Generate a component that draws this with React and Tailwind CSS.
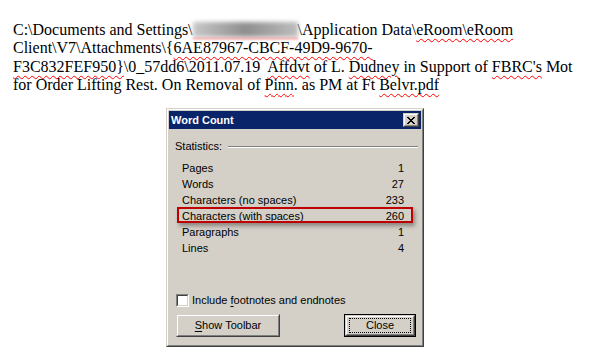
import React from "react";

const W = ({ children }) => (
  <span className="underline decoration-wavy decoration-[#ff0000] decoration-1 underline-offset-[3px]">
    {children}
  </span>
);

function Raised({ className = "", children }) {
  return (
    <div className={"border border-t-[#d4d0c8] border-l-[#d4d0c8] border-r-[#404040] border-b-[#404040] " + className}>
      <div className="w-full h-full border border-t-white border-l-white border-r-[#808080] border-b-[#808080] bg-[#d4d0c8] flex items-center justify-center">
        {children}
      </div>
    </div>
  );
}

const Row = ({ label, value, highlight }) => (
  <div className="relative h-[16px] leading-[16px] flex justify-between pl-[13px] pr-[17px]">
    {highlight && (
      <div className="absolute left-[8px] right-[8px] top-[-1px] h-[16px] border-2 border-[#c00000] shadow-[2px_3px_4px_rgba(0,0,0,0.35)]" />
    )}
    <span>{label}</span>
    <span>{value}</span>
  </div>
);

export default function App() {
  return (
    <div className="w-[595px] h-[362px] bg-white overflow-hidden">
      <div className="h-[108px] pt-[21px] pl-[13px] text-[16px] leading-[18.4px] text-black font-['Liberation_Serif',serif]">
        <div className="whitespace-pre">
          {"C:\\Documents and Settings\\"}
          <span className="relative inline-block w-[105px] h-[15px] align-[-2px]">
            <span className="absolute inset-0 bg-linear-to-r from-[#c8c8c8] via-[#8f8f8f] to-[#bdbdbd] blur-[2px]" />
            <span className="absolute left-0 right-0 bottom-[-2px] h-[1px] bg-[#ff6060] blur-[1px]" />
          </span>
          {"\\Application Data\\"}
          <W>{"eRoom\\eRoom"}</W>
        </div>
        <div className="whitespace-pre">
          {"Client\\V7\\Attachments\\{"}
          <W>{"6AE87967-CBCF-49D9-9670-"}</W>
        </div>
        <div className="whitespace-pre">
          <W>{"F3C832FEF950}"}</W>
          {"\\0_57dd6\\2011.07.19  "}
          <W>Affdvt</W>
          {" of L. "}
          <W>Dudney</W>
          {" in Support of "}
          <W>FBRC's</W>
          {" Mot"}
        </div>
        <div className="whitespace-pre">
          {"for Order Lifting Rest. On Removal of "}
          <W>Pinn</W>
          {". as PM at Ft "}
          <W>Belvr.pdf</W>
        </div>
      </div>

      <div className="ml-[166px] w-[258px] h-[239px] border border-t-[#d4d0c8] border-l-[#d4d0c8] border-r-[#404040] border-b-[#404040] font-['Liberation_Sans',Arial,sans-serif] text-[11px] text-black">
        <div className="w-full h-full border border-t-white border-l-white border-r-[#808080] border-b-[#808080] bg-[#d4d0c8] p-[1px] flex flex-col">
          <div className="h-[18px] bg-[#0a246a] flex items-center justify-between pl-[2px] pr-[2px]">
            <span className="text-white font-bold text-[11px] leading-[18px]">Word Count</span>
            <Raised className="w-[16px] h-[14px]">
              <svg width="8" height="7" viewBox="0 0 8 7" shapeRendering="crispEdges">
                <path d="M0 0h2v1h-2z M6 0h2v1h-2z M1 1h2v1h-2z M5 1h2v1h-2z M2 2h4v1h-4z M3 3h2v1h-2z M2 4h4v1h-4z M1 5h2v1h-2z M5 5h2v1h-2z M0 6h2v1h-2z M6 6h2v1h-2z" fill="#000" />
              </svg>
            </Raised>
          </div>

          <div className="mt-[11px] h-[13px] leading-[13px] flex items-center pl-[6px] pr-[3px]">
            <span>Statistics:</span>
            <div className="flex-1 ml-[6px] h-[2px] border-t border-t-[#808080] border-b border-b-white" />
          </div>

          <div className="mt-[7px]">
            <Row label="Pages" value="1" />
            <Row label="Words" value="27" />
            <Row label="Characters (no spaces)" value="233" />
            <Row label="Characters (with spaces)" value="260" highlight />
            <Row label="Paragraphs" value="1" />
            <Row label="Lines" value="4" />
          </div>

          <div className="mt-[38px] h-[13px] flex items-center pl-[7px]">
            <div className="w-[13px] h-[13px] border border-t-[#808080] border-l-[#808080] border-r-white border-b-white">
              <div className="w-full h-full bg-white border border-t-[#404040] border-l-[#404040] border-r-[#d4d0c8] border-b-[#d4d0c8]" />
            </div>
            <span className="ml-[3px] leading-[13px]">
              Include <span className="underline underline-offset-[2px]">f</span>ootnotes and endnotes
            </span>
          </div>

          <div className="mt-[7px] flex justify-between pl-[7px] pr-[5px]">
            <Raised className="w-[104px] h-[23px]">
              <span>
                <span className="underline underline-offset-[2px]">S</span>how Toolbar
              </span>
            </Raised>
            <div className="w-[72px] h-[23px] border border-black">
              <Raised className="w-full h-full">
                <div className="w-[62px] h-[15px] border border-dotted border-black flex items-center justify-center">
                  Close
                </div>
              </Raised>
            </div>
          </div>
        </div>
      </div>
    </div>
  );
}
